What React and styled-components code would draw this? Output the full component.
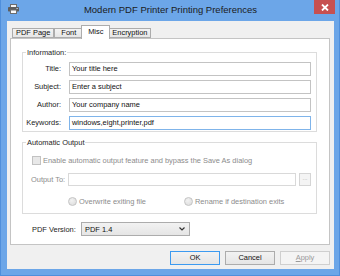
import styled, { createGlobalStyle } from "styled-components";

const GlobalStyle = createGlobalStyle`
  html, body {
    margin: 0;
    padding: 0;
  }
  body {
    font-family: "Liberation Sans", Arial, sans-serif;
    font-size: 7.45px;
    color: #222;
  }
  * {
    box-sizing: border-box;
  }
`;

const Window = styled.div`
  width: 340px;
  height: 276px;
  background: #6ca6e8;
  border: 1px solid #4f8fdc;
  border-top: none;
  display: flex;
  flex-direction: column;
  padding: 0 5px 6px 6px;
`;

const TitleBar = styled.div`
  height: 21px;
  display: grid;
  grid-template-columns: 1fr auto 1fr;
  align-items: start;
`;

const AppIcon = styled.svg`
  margin: 4px 0 0 1px;
`;

const Title = styled.div`
  font-size: 9.5px;
  line-height: 21px;
  color: #1b1b1b;
  margin-top: -1px;
`;

const CloseButton = styled.div`
  justify-self: end;
  width: 21px;
  height: 14px;
  margin-right: -1px;
  background: #c75050;
  display: flex;
  align-items: center;
  justify-content: center;
`;

const Client = styled.div`
  flex: 1;
  background: #f0f0f0;
  display: flex;
  flex-direction: column;
  padding: 4px 4px 4px 3px;
`;

const TabStrip = styled.div`
  display: flex;
  align-items: flex-end;
  height: 13px;
  padding-left: 2px;
  position: relative;
  z-index: 1;
`;

const Tab = styled.div`
  min-width: 29px;
  height: ${(p) => (p.$active ? "14px" : "10px")};
  margin: ${(p) => (p.$active ? "0 -2px -1px" : "0")};
  padding: ${(p) => (p.$active ? "0 5px" : "0 3px")};
  border: 1px solid #acacac;
  border-bottom: ${(p) => (p.$active ? "none" : "1px solid #acacac")};
  background: ${(p) =>
    p.$active ? "#ffffff" : "linear-gradient(#f3f3f3, #e6e6e6)"};
  line-height: ${(p) => (p.$active ? "11px" : "8px")};
  text-align: center;
  white-space: nowrap;
  color: #111;
  position: relative;
  z-index: ${(p) => (p.$active ? 2 : 1)};
  & + & {
    border-left: ${(p) => (p.$active ? "1px solid #acacac" : "none")};
  }
`;

const Panel = styled.div`
  flex: 1;
  background: #ffffff;
  border: 1px solid #c4c4c4;
  padding: 9px 12px 0 11px;
  display: flex;
  flex-direction: column;
`;

const GroupBox = styled.fieldset`
  margin: ${(p) => p.$top || 0}px 0 0;
  padding: 0;
  border: 1px solid #dcdcdc;
  min-width: 0;
`;

const Legend = styled.legend`
  padding: 0 1px;
  margin-left: 3px;
  line-height: 9px;
  color: #1e1e1e;
`;

const FormGrid = styled.div`
  display: grid;
  grid-template-columns: 38px 1fr;
  grid-auto-rows: 14px;
  column-gap: 8px;
  row-gap: 4px;
  padding: 5px 5px 1px 0;
`;

const FieldLabel = styled.label`
  text-align: right;
  line-height: 14px;
  white-space: nowrap;
  color: ${(p) => (p.$disabled ? "#8c8c8c" : "#222")};
`;

const TextBox = styled.div`
  height: ${(p) => p.$h || 14}px;
  border: 1px solid ${(p) =>
    p.$focused ? "#7fb4ea" : p.$disabled ? "#d9d9d9" : "#c3c3c3"};
  background: #ffffff;
  padding-left: 2px;
  line-height: ${(p) => (p.$h || 14) - 2}px;
  color: #111;
  white-space: nowrap;
  overflow: hidden;
  flex: 1;
`;

const AutoBody = styled.div`
  display: flex;
  flex-direction: column;
  padding: 8px 5px 7px 9px;
`;

const CheckRow = styled.div`
  display: flex;
  align-items: center;
  gap: 2px;
  height: 10px;
  color: #8c8c8c;
  white-space: nowrap;
`;

const CheckBox = styled.span`
  width: 9px;
  height: 9px;
  border: 1px solid #c2c2c2;
  background: #e8e8e8;
  flex: none;
`;

const OutputRow = styled.div`
  display: flex;
  align-items: center;
  margin-top: 8px;
  height: 13px;
`;

const OutputLabel = styled.span`
  width: 37px;
  flex: none;
  color: #8c8c8c;
  white-space: nowrap;
  margin-left: -1px;
`;

const BrowseButton = styled.div`
  width: 12px;
  height: 13px;
  margin-left: 3px;
  border: 1px solid #d5d5d5;
  background: #f4f4f4;
  color: #a8a8a8;
  font-size: 6px;
  line-height: 9px;
  text-align: center;
  flex: none;
`;

const RadioRow = styled.div`
  display: grid;
  grid-template-columns: 116px auto;
  padding-left: 36px;
  margin-top: 10px;
  height: 10px;
`;

const RadioOption = styled.div`
  display: flex;
  align-items: center;
  gap: 2px;
  color: #8c8c8c;
  white-space: nowrap;
`;

const RadioDot = styled.span`
  width: 9px;
  height: 9px;
  border-radius: 50%;
  border: 1px solid #c4c4c4;
  background: radial-gradient(circle at 40% 35%, #f2f2f2, #dadada);
  flex: none;
`;

const VersionRow = styled.div`
  display: flex;
  align-items: center;
  margin-top: 8px;
  padding-left: 10px;
  height: 14px;
`;

const VersionLabel = styled.span`
  width: 49px;
  flex: none;
  white-space: nowrap;
`;

const ComboBox = styled.div`
  width: 109px;
  height: 14px;
  border: 1px solid #acacac;
  background: linear-gradient(#f2f2f2, #e5e5e5);
  display: flex;
  align-items: center;
  justify-content: space-between;
  padding: 0 4px 0 3px;
  color: #111;
`;

const ButtonRow = styled.div`
  display: flex;
  justify-content: flex-end;
  gap: 5px;
  margin-top: 6px;
  height: 14px;
`;

const Button = styled.div`
  width: 50px;
  height: 14px;
  border: 1px solid
    ${(p) => (p.$default ? "#3c9af0" : p.$disabled ? "#cfcfcf" : "#acacac")};
  background: ${(p) =>
    p.$disabled ? "#f4f4f4" : "linear-gradient(#f2f2f2, #e5e5e5)"};
  color: ${(p) => (p.$disabled ? "#9a9a9a" : "#111")};
  text-align: center;
  line-height: 12px;
`;

function PrinterIcon() {
  return (
    <AppIcon width="11" height="10" viewBox="0 0 11 10">
      <rect x="2.5" y="0.5" width="6" height="3" fill="#f4f4f4" stroke="#6d6d6d" />
      <rect x="0" y="3" width="11" height="4.5" rx="0.8" fill="#5e5e5e" />
      <rect x="2.5" y="6" width="6" height="3.5" fill="#fafafa" stroke="#6d6d6d" />
      <rect x="8.5" y="4" width="1.2" height="1" fill="#cfe3f6" />
    </AppIcon>
  );
}

export default function App() {
  return (
    <>
      <GlobalStyle />
      <Window>
        <TitleBar>
          <PrinterIcon />
          <Title>Modern PDF Printer Printing Preferences</Title>
          <CloseButton>
            <svg width="8" height="7" viewBox="0 0 8 7">
              <path d="M1 0.5 L7 6.5 M7 0.5 L1 6.5" stroke="#fff" strokeWidth="1.8" />
            </svg>
          </CloseButton>
        </TitleBar>
        <Client>
          <TabStrip>
            <Tab>PDF Page</Tab>
            <Tab>Font</Tab>
            <Tab $active>Misc</Tab>
            <Tab>Encryption</Tab>
          </TabStrip>
          <Panel>
            <GroupBox>
              <Legend>Information:</Legend>
              <FormGrid>
                <FieldLabel>Title:</FieldLabel>
                <TextBox>Your title here</TextBox>
                <FieldLabel>Subject:</FieldLabel>
                <TextBox>Enter a subject</TextBox>
                <FieldLabel>Author:</FieldLabel>
                <TextBox>Your company name</TextBox>
                <FieldLabel>Keywords:</FieldLabel>
                <TextBox $focused>windows,eight,printer,pdf</TextBox>
              </FormGrid>
            </GroupBox>
            <GroupBox $top={6}>
              <Legend>Automatic Output</Legend>
              <AutoBody>
                <CheckRow>
                  <CheckBox />
                  Enable automatic output feature and bypass the Save As dialog
                </CheckRow>
                <OutputRow>
                  <OutputLabel>Output To:</OutputLabel>
                  <TextBox $disabled $h={13} />
                  <BrowseButton>...</BrowseButton>
                </OutputRow>
                <RadioRow>
                  <RadioOption>
                    <RadioDot />
                    Overwrite exiting file
                  </RadioOption>
                  <RadioOption>
                    <RadioDot />
                    Rename if destination exits
                  </RadioOption>
                </RadioRow>
              </AutoBody>
            </GroupBox>
            <VersionRow>
              <VersionLabel>PDF Version:</VersionLabel>
              <ComboBox>
                PDF 1.4
                <svg width="6" height="4" viewBox="0 0 6 4">
                  <path d="M0.5 0.5 L3 3 L5.5 0.5" fill="none" stroke="#333" strokeWidth="1.2" />
                </svg>
              </ComboBox>
            </VersionRow>
          </Panel>
          <ButtonRow>
            <Button $default>OK</Button>
            <Button>Cancel</Button>
            <Button $disabled>
              <u>A</u>pply
            </Button>
          </ButtonRow>
        </Client>
      </Window>
    </>
  );
}
